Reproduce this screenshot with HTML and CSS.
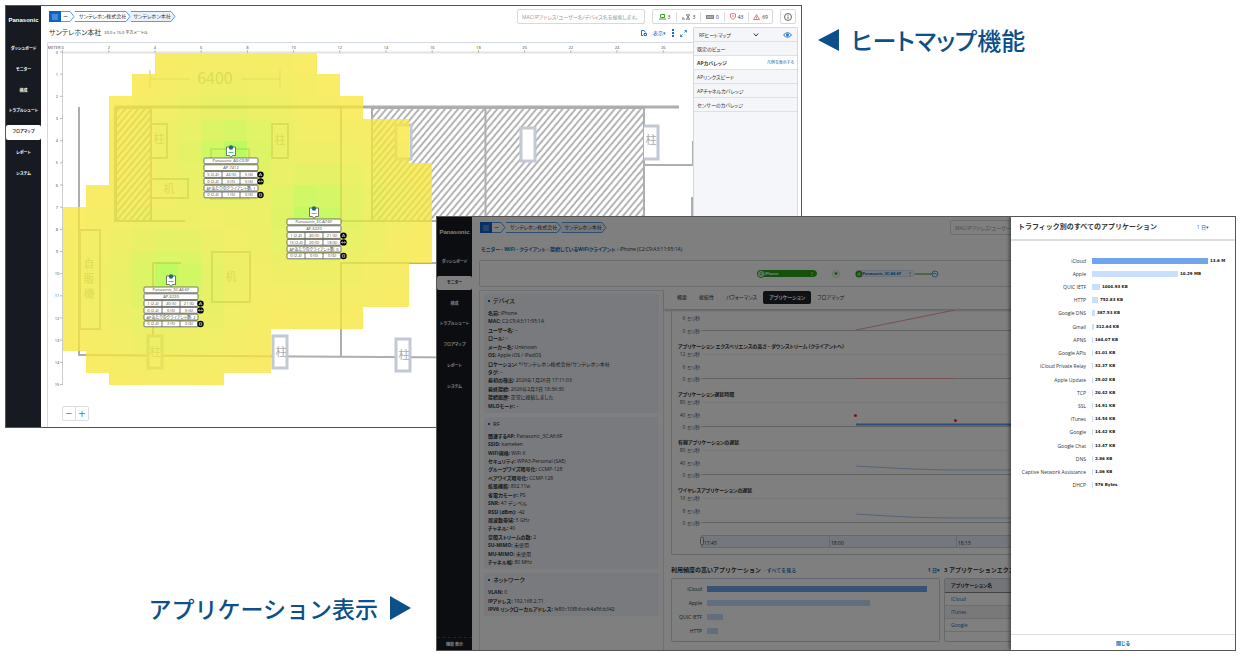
FILE: index.html
```html
<!DOCTYPE html>
<html lang="ja">
<head>
<meta charset="utf-8">
<title>ヒートマップ機能 / アプリケーション表示</title>
<link rel="stylesheet" href="styles.css">
</head>
<body>
<div class="stage">

  <section class="window window-map">
    <aside class="side">
      <div class="logo">Panasonic</div>
      <nav class="side-nav">
        <a href="#">ダッシュボード</a><a href="#">モニター</a><a href="#">構成</a><a href="#">トラブルシュート</a><a href="#" class="active">フロアマップ</a><a href="#">レポート</a><a href="#">システム</a>
      </nav>
    </aside>
    <div class="main">
      <header class="topbar">
        <nav class="trail">
          <button class="trail-menu" aria-label="メニュー"><svg width="6" height="6"><path d="M0 1h6M0 3h6M0 5h6" stroke="#7fb4ee"/></svg></button>
          <a href="#" class="dots">ー</a>
          <svg class="chev" width="5" height="11"><path d="M0 .5L4 5.500L0 10.500" /></svg>
          <a href="#">サンテレホン株式会社</a>
          <svg class="chev into" width="5" height="11"><path class="fill" d="M0 0H5V11H0L4 5.500Z"/><path d="M0 .5L4 5.500L0 10.500"/></svg>
          <a href="#" class="last">サンテレホン本社</a>
          <svg class="chev" width="5" height="11"><path class="fill" d="M0 .5L4 5.500L0 10.500"/><path d="M0 .5L4 5.500L0 10.500"/></svg>
        </nav>
        <input class="search" type="text" aria-label="検索" placeholder="MAC/IPアドレス/ユーザー名/デバイス名を検索します。">
        <div class="status">
          <span><svg width="7" height="6" fill="none" stroke="#3aa52c"><path d="M1.500 .5h4v3h-4zM0 5h7"/></svg>3</span>
          <span><svg width="9" height="6" fill="none" stroke="#777"><path d="M0 5h3M1 3v2M4 .8h4M4 5.200h4M4.500 1l3 4M7.500 1l-3 4" stroke-width=".9"/></svg>3</span>
          <span><svg width="8" height="6" fill="#888"><path d="M0 1h8v4H0z"/><path d="M2 2v2M4 2v2M6 2v2" stroke="#fff" stroke-width=".6"/></svg>0</span>
          <span><svg width="6" height="7" fill="none" stroke="#e8525a" stroke-width=".8"><path d="M.5 1L3 .5L5.500 1V4L3 6.500L.5 4ZM3 2v2"/></svg>43</span>
          <span><svg width="7" height="6" fill="none" stroke="#e8525a"><path d="M3.500 .7L6.500 5.500H.5ZM3.500 2.500v2" stroke-width=".8"/></svg>69</span>
        </div>
        <button class="info" aria-label="情報"><svg width="8" height="8" fill="none" stroke="#444" stroke-width=".8"><circle cx="4" cy="4" r="3.500"/><path d="M4 3.500v2.500M4 1.800v.9"/></svg></button>
      </header>
      <div class="map-layout">
        <div class="map-col">
          <div class="map-head">
            <h1>サンテレホン本社</h1><small>30.0 x 15.0 平方メートル</small>
            <div class="map-tools">
              <button aria-label="出力"><svg width="6" height="6" fill="none" stroke="#1b6ec2"><path d="M4.500 2.500L3 .5H.5V5.500H2M3 3.500h2.500v2H3z"/></svg></button>
              <button>表示▾</button>
              <button aria-label="メニュー"><svg width="2" height="8" fill="#1b6ec2"><path d="M0 0h2v2H0zM0 3h2v2H0zM0 6h2v2H0z"/></svg></button>
              <button aria-label="拡大"><svg width="7" height="7" fill="none" stroke="#1b6ec2"><path d="M4.500 2.500L6.500 .5M4.500 .5h2v2M2.500 4.500L.5 6.500M.5 4.500v2h2" stroke-width=".8"/></svg></button>
            </div>
          </div>
          <div class="map-box">
            <svg class="map" viewBox="48 43 645 384" preserveAspectRatio="xMinYMin slice" role="img" aria-label="フロアマップ">
              <defs>
                <pattern id="hatch" width="5" height="5" patternUnits="userSpaceOnUse" patternTransform="rotate(40)"><rect width="5" height="5" fill="#fff"/><rect width="2" height="5" fill="#b5b5b5"/></pattern>
              </defs>
              <g fill="none" stroke="#aeaeae" stroke-width="2">
                <rect x="116" y="108" width="35" height="113" fill="url(#hatch)"/>
                <rect x="372" y="108" width="272" height="113" fill="url(#hatch)"/>
                <path d="M79 107V356M115 107H679M115 107V221H185M341 108V222M341 221H437M485.500 108V221" />
                <path d="M115 107H679" stroke-width="3"/>
                <path d="M79 355L693 359M153 335V263H181M341 357V263H437M644 165H693V141M692 216V197"/>
              </g>
              <g fill="none" stroke="#b4b4b4" stroke-width="2">
                <path d="M151 124H167V158H151M151 179H188V198H151"/>
                <rect x="272" y="124" width="16" height="34"/>
                <rect x="211" y="149" width="38" height="50"/>
                <rect x="212" y="252" width="38" height="50"/>
                <rect x="80" y="230" width="20" height="99"/>
              </g>
              <g fill="#fff" stroke="#c2c8d4" stroke-width="3">
                <rect x="396" y="125" width="15" height="34"/>
                <rect x="521" y="128" width="14" height="33"/>
                <path d="M644 126H658V159H644"/>
                <rect x="148" y="336" width="14" height="32"/>
                <rect x="273" y="336" width="14" height="32"/>
                <rect x="396" y="339" width="14" height="32"/>
              </g>
              <g class="plan-text">
                <text x="159" y="143">柱</text><text x="280" y="144">柱</text><text x="651" y="144">柱</text>
                <text x="155" y="356">柱</text><text x="281" y="356">柱</text><text x="404" y="359">柱</text>
                <text x="169" y="193">机</text><text x="231" y="281">机</text>
                <text x="89" y="268">自</text><text x="89" y="283">販</text><text x="89" y="298">機</text>
                <text class="dim" x="215" y="84">6400</text>
              </g>
              <path d="M150 79H190M241 79H280M150 70V88M280 70V88" stroke="#bbb" fill="none"/>
              <g id="heat" opacity=".77"></g>
              <path d="M62 52.500H693" stroke="#e3e3e3" stroke-width="2"/>
              <path d="M62.500 52V385" stroke="#ccc"/>
              <g id="ruler"><text x="54" y="49">METER</text></g>
              <g id="aps"></g>
            </svg>
            <div class="zoom"><button aria-label="縮小">−</button><button aria-label="拡大">+</button></div>
          </div>
        </div>
        <div class="panel">
          <div class="panel-head">
            <label><select aria-label="ヒートマップ"><option>RFヒートマップ</option></select>
            <svg width="6" height="4" fill="none" stroke="#333"><path d="M.8 .5L3 3L5.200 .5"/></svg></label>
            <svg width="9" height="6" fill="none" stroke="#1b75d0"><path d="M.5 3Q4.500 -1.500 8.500 3Q4.500 7.500 .5 3Z"/><circle cx="4.500" cy="3" r="1" fill="#1b75d0"/></svg>
          </div>
          <ul>
            <li>既定のビュー</li>
            <li class="on">APカバレッジ <a href="#">凡例を表示する</a></li>
            <li>APリンクスピード</li>
            <li>APチャネルカバレッジ</li>
            <li>センサーのカバレッジ</li>
          </ul>
        </div>
      </div>
    </div>
  </section>

  <h2 class="caption caption-map"><svg width="21" height="22"><path d="M21 0V22L0 11Z" fill="#0d4f88"/></svg>ヒートマップ機能</h2>
  <h2 class="caption caption-app">アプリケーション表示<svg width="21" height="24"><path d="M0 0V24L21 12Z" fill="#0d4f88"/></svg></h2>

  <section class="window window-app">
    <aside class="side">
      <div class="logo">Panasonic</div>
      <nav class="side-nav">
        <a href="#">ダッシュボード</a><a href="#" class="active">モニター</a><a href="#">構成</a><a href="#">トラブルシュート</a><a href="#">フロアマップ</a><a href="#">レポート</a><a href="#">システム</a>
      </nav>
      <div class="side-foot">機能 表示</div>
    </aside>
    <div class="main">
      <header class="topbar topbar-app">
        <nav class="trail">
          <button class="trail-menu" aria-label="メニュー"><svg width="6" height="6"><path d="M0 1h6M0 3h6M0 5h6" stroke="#7fb4ee"/></svg></button>
          <a href="#" class="dots">ー</a>
          <svg class="chev" width="5" height="11"><path d="M0 .5L4 5.500L0 10.500" /></svg>
          <a href="#">サンテレホン株式会社</a>
          <svg class="chev into" width="5" height="11"><path class="fill" d="M0 0H5V11H0L4 5.500Z"/><path d="M0 .5L4 5.500L0 10.500"/></svg>
          <a href="#" class="last">サンテレホン本社</a>
          <svg class="chev" width="5" height="11"><path class="fill" d="M0 .5L4 5.500L0 10.500"/><path d="M0 .5L4 5.500L0 10.500"/></svg>
        </nav>
        <input class="search" type="text" aria-label="検索" placeholder="MAC/IPアドレス/ユーザー名/デバイス名">
      </header>
      <div class="path"><a href="#">モニター - WiFi - クライアント</a> › <a href="#">接続しているWiFiクライアント</a> › iPhone (C2:C9:A3:11:95:1A)</div>
      <div class="link-box">
        <div class="pill pill-green"><svg width="8" height="8"><circle cx="4" cy="4" r="3.500" fill="#eaffea" stroke="#2ba319"/><path d="M2.500 5h3M3 2.500h2v2H3z" fill="none" stroke="#2ba319" stroke-width=".6"/></svg>iPhone<i>⋮</i></div>
        <svg class="wifi" width="8" height="8"><circle cx="4" cy="4" r="3.500" fill="#fff" stroke="#9ed695" stroke-width=".6"/><path d="M2 3Q4 1.500 6 3L4 5.500Z" fill="#2ba319"/></svg>
        <div class="pill"><svg width="8" height="8"><circle cx="4" cy="4" r="3.500" fill="#2ba319"/><path d="M2.500 5L4 2.500L5.500 5Z" fill="none" stroke="#fff" stroke-width=".6"/></svg>Panasonic_3C:A6:6F<i>⋮</i></div>
        <svg width="24" height="8" fill="none"><path d="M0 4H17" stroke="#2ba319"/><circle cx="20" cy="4" r="3" stroke="#3a86d8" stroke-width=".8"/><path d="M18 4l2-1 2 2" stroke="#3a86d8" stroke-width=".8"/></svg>
      </div>
      <div class="client">
        <div class="facts">
          <section>
            <h3>デバイス</h3>
            <ul>
              <li><b>名前:</b> iPhone</li><li><b>MAC:</b> C2:C9:A3:11:95:1A</li><li><b>ユーザー名:</b> –</li><li><b>ロール:</b> –</li><li><b>メーカー名:</b> Unknown</li><li><b>OS:</b> Apple iOS / iPadOS</li><li><b>ロケーション:</b> */サンテレホン株式会社/サンテレホン本社</li><li><b>タグ:</b> –</li><li><b>最初の検出:</b> 2026年1月26日 17:11:03</li><li><b>最終接続:</b> 2026年2月3日 18:36:30</li><li><b>接続履歴:</b> 正常に接続しました</li><li><b>MLOモード:</b> –</li>
            </ul>
          </section>
          <section>
            <h3>RF</h3>
            <ul>
              <li><b>関連するAP:</b> Panasonic_3C:A6:6F</li><li><b>SSID:</b> kameken</li><li><b>WiFi規格:</b> WiFi 6</li><li><b>セキュリティ:</b> WPA3-Personal (SAE)</li><li><b>グループワイズ暗号化:</b> CCMP-128</li><li><b>ペアワイズ暗号化:</b> CCMP-128</li><li><b>拡張機能:</b> 802.11w</li><li><b>省電力モード:</b> PS</li><li><b>SNR:</b> 47 デシベル</li><li><b>RSSI (dBm):</b> -42</li><li><b>周波数帯域:</b> 5 GHz</li><li><b>チャネル:</b> 40</li><li><b>空間ストリームの数:</b> 2</li><li><b>SU-MIMO:</b> 未使用</li><li><b>MU-MIMO:</b> 未使用</li><li><b>チャネル幅:</b> 80 MHz</li>
            </ul>
          </section>
          <section>
            <h3>ネットワーク</h3>
            <ul>
              <li><b>VLAN:</b> 0</li><li><b>IPアドレス:</b> 192.168.2.71</li><li><b>IPV6 リンクローカルアドレス:</b> fe80::10f8:6cc4:4a56:b342</li>
            </ul>
          </section>
        </div>
        <div class="detail">
          <nav class="tabs"><a href="#">概要</a><a href="#">接続性</a><a href="#">パフォーマンス</a><a href="#" class="active">アプリケーション</a><a href="#">フロアマップ</a></nav>
          <div class="charts">
            <div class="plot plot-first"><div><span></span><span>6 ミリ秒</span><span>0 ミリ秒</span></div><svg><path class="base" d="M0 21.500H600"/><path class="red" d="M154 21L253 1"/></svg></div>
            <h4>アプリケーション エクスペリエンスの高さ - ダウンストリーム (クライアントへ)</h4>
            <div class="plot"><div><span>12 ミリ秒</span><span>6 ミリ秒</span><span>0 ミリ秒</span></div><svg><path class="top" d="M0 4.500H600"/><path class="base" d="M0 28.500H600"/><path class="red" d="M154 28.500H253"/></svg></div>
            <h4>アプリケーション遅延時間</h4>
            <div class="plot"><div><span>80 ミリ秒</span><span>40 ミリ秒</span><span>0 ミリ秒</span></div><svg><path class="top" d="M0 4.500H600"/><path class="base" d="M0 28.500H600"/><path d="M154 26.500H600" stroke="#5a9be8" stroke-width="2"/><circle cx="153.500" cy="17.500" r="1.500" fill="#f22"/><circle cx="253.500" cy="22.500" r="1.500" fill="#f22"/></svg></div>
            <h4>有線アプリケーションの遅延</h4>
            <div class="plot"><div><span>80 ミリ秒</span><span>40 ミリ秒</span><span>0 ミリ秒</span></div><svg><path class="top" d="M0 4.500H600"/><path class="base" d="M0 28.500H600"/><path class="blue" d="M154 20Q220 24 253 24H600"/></svg></div>
            <h4>ワイヤレスアプリケーションの遅延</h4>
            <div class="plot"><div><span>16 ミリ秒</span><span>8 ミリ秒</span><span>0 ミリ秒</span></div><svg><path class="top" d="M0 4.500H600"/><path class="base" d="M0 28.500H600"/><path class="blue" d="M154 20Q210 24 253 24H600"/></svg></div>
            <div class="times"><svg class="grip" width="4" height="8"><rect x=".5" y=".5" width="3" height="7" rx="1" fill="#fff" stroke="#888"/></svg><span>17:45</span><span>18:00</span><span>18:15</span></div>
          </div>
          <div class="lower">
            <div class="top-apps">
              <h3>利用頻度の高いアプリケーション<a href="#"> - すべてを見る</a><button>1 日▾</button></h3>
              <div class="box">
                <div class="mini strong"><span>iCloud</span><i style="width:97%"></i></div>
                <div class="mini"><span>Apple</span><i style="width:72%"></i></div>
                <div class="mini"><span>QUIC IETF</span><i style="width:7%"></i></div>
                <div class="mini"><span>HTTP</span><i style="width:5%"></i></div>
              </div>
            </div>
            <div class="experience">
              <h3>3 アプリケーションエクス</h3>
              <div class="box"><table><thead><tr><th>アプリケーション名</th></tr></thead><tbody><tr><td><a href="#">iCloud</a></td></tr><tr><td><a href="#">iTunes</a></td></tr><tr><td><a href="#">Google</a></td></tr></tbody></table></div>
            </div>
          </div>
        </div>
      </div>
    </div>
    <div class="shade"></div>
    <aside class="drawer">
      <header><h2>トラフィック別のすべてのアプリケーション</h2><button>1 日▾</button></header>
      <div class="drawer-body">
        <ul id="traffic"></ul>
      </div>
      <footer><button>閉じる</button></footer>
    </aside>
  </section>
</div>
<script src="app.js"></script>
</body>
</html>
```

FILE: styles.css
```css
* { box-sizing: border-box; }
body, ul, h1, h2, h3, h4 { margin: 0; padding: 0; }
body {
  background: #fff;
  color: #333;
  font: 5px/8px "Open Sans", "Noto Sans CJK JP", sans-serif;
  font-feature-settings: "palt";
}
ul { list-style: none; }
a { color: #1668b8; text-decoration: none; }
button, input, select { font: inherit; font-feature-settings: inherit; color: inherit; background: none; border: 0; padding: 0; margin: 0; }
button { color: #1668b8; display: inline-flex; align-items: center; justify-content: center; }
svg { display: block; flex: none; }
h3, h4 { font-weight: 700; }

.stage {
  display: grid;
  grid-template-columns: 431fr 366fr 434fr;
  grid-template-rows: 211fr 212fr 223fr;
  height: 100vh;
  min-height: 655px;
  padding: 5px 4px 4px 5px;
}
.window {
  position: relative;
  display: flex;
  min-width: 0;
  min-height: 0;
  overflow: hidden;
  border: 1px solid #555;
  background: #fff;
}
.window-map { grid-area: 1 / 1 / 3 / 3; }
.window-app { grid-area: 2 / 2 / 4 / 4; }

.caption {
  display: flex;
  align-items: center;
  gap: 12px;
  color: #0d4f88;
  font: 500 24px/32px "Noto Sans CJK JP", sans-serif;
  white-space: nowrap;
}
.caption-map { grid-area: 1 / 3; align-self: start; margin: 19px 0 0 16px; font-feature-settings: "palt"; }
.caption-app { grid-area: 3 / 1; align-self: start; justify-self: end; margin: 164px 25px 0 0; font-size: 23px; }

/* sidebar */
.side {
  flex: none;
  width: 35px;
  display: flex;
  flex-direction: column;
  background: #181a21;
  color: #fff;
  text-align: center;
}
.logo { font: 700 6px/8px "Liberation Sans", sans-serif; padding: 10px 0; }
.window-app .logo { padding: 11px 0; }
.side-nav { display: grid; grid-auto-rows: 1fr; height: 145px; margin-top: 5px; }
.side-nav a {
  display: flex;
  align-items: center;
  justify-content: center;
  margin: 3px 0;
  border-radius: 2px;
  color: #fff;
  font-size: 4px;
  font-weight: 700;
  white-space: nowrap;
}
.side-nav .active { background: #fff; color: #222; }
.side-foot { margin-top: auto; border-top: 1px dashed #2f4c78; padding: 3px 0 1px; font-size: 4px; font-weight: 700; }

/* top bar */
.main { flex: 1; min-width: 0; display: flex; flex-direction: column; padding: 3px 3px 0 6px; }
.window-app .main { padding-left: 7px; }
.topbar { display: flex; align-items: center; gap: 7px; height: 15px; padding: 0 2px; flex: none; }
.topbar-app { padding: 0 154px 0 1px; }
.trail { display: flex; height: 11px; white-space: nowrap; }
.trail a { border: solid #5b9bdd; border-width: 1px 0; padding: 0 0 0 4px; line-height: 9px; color: #333; }
.trail .dots { padding: 0 2px; }
.trail .last { background: #e9f3fc; padding-left: 2px; }
.trail-menu { width: 12px; background: #0f62c4; }
.chev path { fill: none; stroke: #5b9bdd; }
.chev .fill { fill: #e9f3fc; stroke: none; }
.search { width: 128px; height: 15px; margin-left: auto; border: 1px solid #d9d9d9; border-radius: 2px; padding: 0 4px; }
.search::placeholder { color: #999; opacity: 1; }
.status { display: flex; height: 15px; width: 121px; align-items: center; border: 1px solid #d9d9d9; border-radius: 2px; }
.status span { flex: 1; display: flex; align-items: center; justify-content: center; gap: 2px; border-left: 1px solid #ddd; height: 10px; }
.status span:first-child { border: 0; }
.info { width: 16px; height: 15px; border: 1px solid #d9d9d9; border-radius: 2px; }

/* floor map */
.map-layout { flex: 1; min-height: 0; display: grid; grid-template-columns: minmax(0, 1fr) 105px; }
.map-col { display: flex; flex-direction: column; min-height: 0; }
.map-head { display: flex; align-items: center; gap: 3px; height: 18px; padding: 0 6px 0 2px; }
.map-head h1 { font-size: 7px; font-weight: 400; }
.map-head small { font-size: 4px; }
.map-tools { margin-left: auto; display: flex; gap: 6px; align-items: center; }
.map-box { position: relative; flex: 1; min-height: 0; overflow: hidden; border: solid #d3dae3; border-width: 1px 0 0 1px; border-radius: 2px 0 0 0; }
.map { width: 100%; height: 100%; }
.map text { text-anchor: middle; font-size: 4px; fill: #444; }
.map .plan-text text { font-size: 11px; fill: #aaa; }
.map .plan-text .dim { font: 16px "Noto Sans CJK JP", sans-serif; }
.zoom { position: absolute; left: 14px; bottom: 6px; display: flex; border: 1px solid #ddd; border-radius: 2px; background: #fff; }
.zoom button { width: 12px; height: 13px; font-size: 12px; color: #3c8fd9; }
.zoom button + button { border-left: 1px solid #ddd; width: 13px; }

.panel { margin-top: 3px; background: #f4f6fa; border: solid #d5d9e0; border-width: 1px 1px 0; border-radius: 2px 2px 0 0; }
.panel-head { display: flex; align-items: center; justify-content: space-between; height: 13px; padding: 0 5px; }
.panel-head label { display: flex; align-items: center; }
.panel select { appearance: none; width: 54px; }
.panel li { display: flex; justify-content: space-between; align-items: center; height: 14px; padding: 0 3px; border-top: 1px solid #dde0e6; }
.panel li:last-child { border-bottom: 1px solid #dde0e6; height: 15px; }
.panel .on { background: #fff; font-weight: 700; }
.panel li a { font-size: 4px; font-weight: 400; }

/* client page */
.path { margin: 10px 0 0 2px; flex: none; white-space: nowrap; }
.path a { font-weight: 700; }
.link-box { flex: none; display: flex; align-items: center; justify-content: center; margin: 7px 4px 0 0; padding-right: 12px; height: 27px; border: 1px solid #d4d8de; border-radius: 2px; }
.pill { display: flex; align-items: center; width: 60px; height: 7px; border-radius: 4px; background: #eef4fc; color: #1668b8; font-size: 4px; font-weight: 700; border: 1px solid #d5e3f5; }
.pill-green { background: #2ba319; color: #fff; border-color: #2ba319; }
.pill svg { margin-left: -1px; }
.pill i { margin-left: auto; padding-right: 2px; font-style: normal; }
.wifi { margin: 0 15px; }
.client { flex: 1; min-height: 0; display: grid; grid-template-columns: 185px minmax(0, 1fr); margin: 3px 4px 0 0; }
.facts { display: grid; grid-template-rows: 119fr 153fr 43fr 30fr; gap: 4px; padding: 3px 4px 0; border: 1px solid #dfe3ea; border-bottom: 0; white-space: nowrap; min-height: 0; }
.facts section { display: flex; flex-direction: column; background: #f1f5fb; padding: 3px 4px; min-height: 0; }
.facts h3 { font-size: 6px; font-weight: 500; padding-left: 5px; margin-bottom: 4px; position: relative; }
.facts h3::before { content: ""; position: absolute; left: 0; top: 3px; width: 2px; height: 2px; background: #1668b8; }
.facts ul { flex: 1; display: flex; flex-direction: column; justify-content: space-between; }
.facts li { line-height: 8px; }

.detail { min-width: 0; }
.tabs { display: flex; align-items: center; height: 19px; padding: 0 0 5px 7px; box-shadow: 0 2px 2px #0003; white-space: nowrap; }
.tabs a { padding: 0 6px; line-height: 13px; color: #333; }
.tabs .active { background: #20222b; color: #fff; font-weight: 700; border-radius: 2px; }
.charts { margin-left: 7px; height: 246px; border: 1px solid #ccd0d8; border-top: 0; border-radius: 0 0 2px 2px; overflow: hidden; padding-left: 6px; }
.charts h4 { margin-top: 7px; font-size: 5px; line-height: 8px; white-space: nowrap; }
.plot { display: grid; grid-template-columns: 23px minmax(0, 1fr); gap: 2px; height: 33px; margin-left: -1px; }
.plot-first { height: 26px; }
.plot div { display: flex; flex-direction: column; justify-content: space-between; text-align: right; color: #555; white-space: nowrap; }
.plot svg { width: 100%; height: 100%; fill: none; }
.plot .base { stroke: #c4c4c4; }
.plot .top { stroke: #eee; }
.plot .red { stroke: #f0a0a0; }
.plot .blue { stroke: #a8c8ee; }
.times { position: relative; display: grid; grid-template-columns: 127px 127px 1fr; margin: 8px 0 0 23px; height: 13px; background: #e8effa; border: 1px solid #c5d2e6; }
.times span { padding: 3px 1px 0; border-left: 1px solid #c5d2e6; }
.grip { position: absolute; left: -2px; top: 1px; }
.lower { display: grid; grid-template-columns: 269px minmax(0, 1fr); gap: 4px; margin: 11px 0 0 7px; }
.lower h3 { display: flex; font-size: 6px; line-height: 8px; height: 12px; white-space: nowrap; font-feature-settings: normal; }
.lower h3 a { font-size: 5px; font-weight: 500; padding-left: 3px; }
.lower h3 button { margin-left: auto; height: 8px; font-size: 5px; }
.box { height: 64px; border: 1px solid #ccd0d8; border-radius: 2px; overflow: hidden; }
.top-apps .box { display: grid; align-content: center; grid-auto-rows: 14px; padding: 0 5px 0 3px; }
.mini { display: grid; grid-template-columns: 27px minmax(0, 1fr); gap: 5px; align-items: center; text-align: right; white-space: nowrap; }
.mini i { height: 6px; background: #c4dafa; }
.mini.strong i { background: #70a5ee; }
table { width: 100%; border-collapse: collapse; }
th, td { height: 13px; padding: 0 6px; text-align: left; border-bottom: 1px solid #ddd; }
th { background: #e6eaf2; border-bottom: 1px solid #888; }
tbody tr:nth-child(2) { background: #f2f2f2; }

.shade { position: absolute; inset: 0; background: rgba(0, 0, 0, .5); }
.drawer { position: absolute; top: 0; right: 0; bottom: 0; width: 224px; display: flex; flex-direction: column; background: #fff; box-shadow: -2px 0 3px #0006; }
.drawer header { display: flex; justify-content: space-between; align-items: center; height: 24px; padding: 0 26px 2px 7px; border-bottom: 2px solid #ddd; }
.drawer h2 { font-size: 7px; font-weight: 700; white-space: nowrap; font-feature-settings: normal; }
.drawer-body { flex: 1; min-height: 0; display: grid; grid-template-rows: 238fr 142fr; padding-top: 13px; }
.drawer ul { display: grid; grid-auto-rows: 1fr; }
.drawer li { display: grid; grid-template-columns: 75px 116px 1fr; gap: 0 6px; align-items: center; white-space: nowrap; }
.drawer li span { text-align: right; }
.drawer .meter { display: flex; align-items: center; gap: 2px; }
.meter i { flex: none; height: 6px; background: #cadffb; }
.drawer li:first-child i { background: #70a5ee; }
.meter b { font: 700 4px/8px "DejaVu Sans", sans-serif; color: #111; }
.drawer footer { display: flex; justify-content: center; height: 16px; border-top: 1px solid #ddd; }
.drawer footer button { font-weight: 700; }
```

FILE: app.js
```js
const NS = 'http://www.w3.org/2000/svg';
const add = (parent, name, attrs, text) => {
  const el = document.createElementNS(NS, name);
  for (const key in attrs) el.setAttribute(key, attrs[key]);
  if (text !== undefined) el.textContent = text;
  parent.appendChild(el);
  return el;
};

// One metre on the map, in drawing units
const X0 = 62.6, Y0 = 52, CX = 23.1, CY = 22.17;
const accessPoints = [
  { name: 'Panasonic_A0:C0:9F', model: 'AP-7412', x: 231, y: 151, rows: [['5 (2.4)', '44 (5)', '5 (6)'], ['0 (2.4)', '0 (5)', '0 (6)'], ['0 (2.4)', '1 (5)', '0 (6)']], clients: 1 },
  { name: 'Panasonic_3C:A7:6F', model: 'AP-6220', x: 314, y: 212, rows: [['1 (2.4)', '40 (5)', '21 (6)'], ['15 (2.4)', '20 (5)', '18 (6)'], ['0 (2.4)', '0 (5)', '0 (6)']], clients: 0 },
  { name: 'Panasonic_3C:A6:6F', model: 'AP-6220', x: 171, y: 280, rows: [['1 (2.4)', '40 (5)', '21 (6)'], ['0 (2.4)', '0 (5)', '0 (6)'], ['0 (2.4)', '2 (5)', '0 (6)']], clients: 2 }
];

// Coverage bands: top, bottom, left, right (metres)
const bands = [
  [0, 1, 4, 11], [1, 2, 3, 12], [2, 3, 2, 13], [3, 4, 2, 15], [4, 5, 2, 15], [5, 6, 2, 16], [6, 7, 1, 16],
  [7, 8, 0, 16], [8, 9, 0, 16], [9, 9.5, 0, 16], [9.5, 10.5, 0, 15], [10.5, 11.5, 0, 15], [11.5, 12.5, 0, 13],
  [12.5, 13.5, 0, 9], [13.5, 14.5, 1, 9], [14.5, 15, 2, 7]
];
const stops = [[0, [160, 250, 50]], [.6, [182, 248, 54]], [1.1, [210, 242, 58]], [2.2, [228, 236, 58]], [4, [243, 232, 58]], [6.5, [252, 229, 58]], [99, [252, 229, 58]]];
const shade = d => {
  const i = stops.findIndex(s => s[0] > d) - 1;
  const [a, b] = [stops[i], stops[i + 1]];
  const t = (d - a[0]) / (b[0] - a[0]);
  return `rgb(${a[1].map((v, k) => Math.round(v + (b[1][k] - v) * t)).join()})`;
};
const heat = document.getElementById('heat');
for (const [top, bottom, left, right] of bands) {
  for (let x = left; x < right; x++) {
    const px = X0 + (x + .5) * CX, py = Y0 + (top + bottom) / 2 * CY;
    const d = Math.min(...accessPoints.map(p => Math.hypot((p.x - px) / CX, (p.y - py) / CY)));
    add(heat, 'rect', { x: X0 + x * CX, y: Y0 + top * CY, width: CX, height: (bottom - top) * CY, fill: shade(d), 'shape-rendering': 'crispEdges' });
  }
}

const ruler = document.getElementById('ruler');
for (let n = 0; n <= 26; n += 2) {
  const x = X0 + n * CX;
  add(ruler, 'text', { x, y: 49 }, n);
  add(ruler, 'path', { d: `M${x} 50v3`, stroke: '#bbb' });
}
for (let n = 0; n <= 15; n++) {
  const y = Y0 + n * CY;
  add(ruler, 'text', { x: 57, y: y + 1.5 }, n);
  add(ruler, 'path', { d: `M60 ${y}h3`, stroke: '#bbb' });
}

const layer = document.getElementById('aps');
for (const p of accessPoints) {
  const g = add(layer, 'g', { transform: `translate(${p.x} ${p.y})` });
  add(g, 'path', { d: 'M-4.500 -4H4.500V4.500H1.500L0 6.500L-1.500 4.500H-4.500Z', fill: '#fff', stroke: '#444', 'stroke-width': .7 });
  add(g, 'circle', { cx: 0, cy: -3.5, r: 2.2, fill: '#1a6f78' });
  add(g, 'path', { d: 'M-2.500 1.500H2.500', stroke: '#58c77c' });
  const box = (y, items) => {
    const w = 54 / items.length;
    add(g, 'rect', { x: -27, y, width: 54, height: 5.8, rx: 1, fill: '#fff', stroke: '#555', 'stroke-width': .8 });
    items.forEach((t, i) => {
      add(g, 'text', { x: -27 + w * (i + .5), y: y + 4.4 }, t);
      if (i) add(g, 'path', { d: `M${-27 + w * i} ${y}v5.800`, stroke: '#555', 'stroke-width': .8 });
    });
  };
  const badge = (y, d) => {
    add(g, 'circle', { cx: 29.5, cy: y + 3, r: 3.2, fill: '#000' });
    add(g, 'path', { d, transform: `translate(29.5 ${y + 3})`, fill: 'none', stroke: '#fff', 'stroke-width': .6 });
  };
  box(7, [p.name]);
  box(13.8, [p.model]);
  box(20.6, p.rows[0]);
  box(27.4, p.rows[1]);
  box(34.2, [`APあたりのクライアント数: ${p.clients}`]);
  box(41, p.rows[2]);
  badge(20.6, 'M-1.500 1.500L0 -1.500L1.500 1.500M-1 .5H1');
  badge(27.4, 'M-2 0H2M-1 -1L-2 0L-1 1M1 -1L2 0L1 1');
  badge(41, 'M-1.200 -1.200H1.200V1.200H-1.200Z');
}

const traffic = [
  ['iCloud', 116, '13.6 M'], ['Apple', 86, '10.29 MB'], ['QUIC IETF', 8, '1004.93 KB'], ['HTTP', 6, '752.83 KB'],
  ['Google DNS', 3, '387.53 KB'], ['Gmail', 2, '312.64 KB'], ['APNS', 1, '164.07 KB'], ['Google APIs', 1, '41.01 KB'],
  ['iCloud Private Relay', 1, '32.37 KB'], ['Apple Update', 1, '25.02 KB'], ['TCP', 1, '20.42 KB'], ['SSL', 1, '14.91 KB'],
  ['iTunes', 1, '14.54 KB'], ['Google', 1, '14.42 KB'], ['Google Chat', 1, '13.47 KB'], ['DNS', 1, '2.86 KB'],
  ['Captive Network Assistance', 1, '1.06 KB'], ['DHCP', 1, '576 Bytes']
];
document.getElementById('traffic').innerHTML = traffic.map(([name, w, size]) =>
  `<li><span>${name}</span><div class="meter"><i style="width:${w}px"></i><b>${size}</b></div></li>`).join('');
```
